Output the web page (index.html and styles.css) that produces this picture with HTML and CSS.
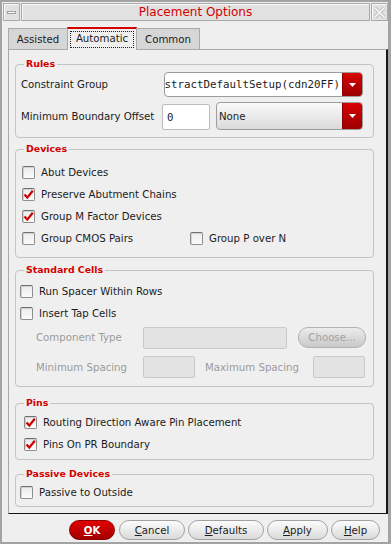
FILE: index.html
```html
<!DOCTYPE html>
<html>
<head>
<meta charset="utf-8">
<link rel="stylesheet" href="styles.css">
</head>
<body>
<div class="window">
  <div class="titlebar">
    <div class="tb-btn"><span class="dash"></span></div>
    <div class="tb-title">Placement Options</div>
    <div class="tb-btn">
      <svg width="13" height="13" viewBox="0 0 13 13"><path d="M2 2 L11 11 M11 2 L2 11" stroke="#bdbdbd" stroke-width="3.4" fill="none"/><path d="M2 2 L11 11 M11 2 L2 11" stroke="#fafafa" stroke-width="1.6" fill="none"/></svg>
    </div>
  </div>
  <div class="client">
    <div class="tabs">
      <div class="tab t-assisted">Assisted</div>
      <div class="tab t-auto active"><span class="focus">Automatic</span></div>
      <div class="tab t-common">Common</div>
    </div>
    <div class="panel">
      <fieldset class="group g-rules">
        <legend>Rules</legend>
        <div class="rules-body">
          <div class="frow r1">
            <span class="flabel l1">Constraint Group</span>
            <div class="combo combo-edit">
              <div class="combo-text mono"><span>AbstractDefaultSetup(cdn20FF)</span></div>
              <div class="combo-arrow"><svg width="7" height="4" viewBox="0 0 7 4"><path d="M0 0 H7 L3.5 4 Z" fill="#fff"/></svg></div>
            </div>
          </div>
          <div class="frow r2">
            <span class="flabel l2">Minimum Boundary Offset</span>
            <div class="entry mono">0</div>
            <div class="combo combo-none">
              <div class="combo-text none-text">None</div>
              <div class="combo-arrow"><svg width="7" height="4" viewBox="0 0 7 4"><path d="M0 0 H7 L3.5 4 Z" fill="#fff"/></svg></div>
            </div>
          </div>
        </div>
      </fieldset>

      <fieldset class="group g-devices">
        <legend>Devices</legend>
        <div class="devices-body">
          <div class="check"><span class="box"></span>Abut Devices</div>
          <div class="check"><span class="box on"><svg width="11" height="11" viewBox="0 0 11 11"><path d="M1.5 5.5 L4.3 8.6 L9.8 1.8" stroke="#d00000" stroke-width="2.3" fill="none"/></svg></span>Preserve Abutment Chains</div>
          <div class="check"><span class="box on"><svg width="11" height="11" viewBox="0 0 11 11"><path d="M1.5 5.5 L4.3 8.6 L9.8 1.8" stroke="#d00000" stroke-width="2.3" fill="none"/></svg></span>Group M Factor Devices</div>
          <div class="pair">
            <div class="check"><span class="box"></span>Group CMOS Pairs</div>
            <div class="check"><span class="box"></span>Group P over N</div>
          </div>
        </div>
      </fieldset>

      <fieldset class="group g-std">
        <legend>Standard Cells</legend>
        <div class="std-body">
          <div class="check"><span class="box"></span>Run Spacer Within Rows</div>
          <div class="check"><span class="box"></span>Insert Tap Cells</div>
          <div class="drow d1">
            <span class="dlabel">Component Type</span>
            <div class="dentry e-comp"></div>
            <div class="choose">Choose...</div>
          </div>
          <div class="drow d2">
            <span class="dlabel">Minimum Spacing</span>
            <div class="dentry e-small"></div>
            <span class="dlabel dlabel-max">Maximum Spacing</span>
            <div class="dentry e-small"></div>
          </div>
        </div>
      </fieldset>

      <fieldset class="group g-pins">
        <legend>Pins</legend>
        <div class="pins-body">
          <div class="check"><span class="box on"><svg width="11" height="11" viewBox="0 0 11 11"><path d="M1.5 5.5 L4.3 8.6 L9.8 1.8" stroke="#d00000" stroke-width="2.3" fill="none"/></svg></span>Routing Direction Aware Pin Placement</div>
          <div class="check"><span class="box on"><svg width="11" height="11" viewBox="0 0 11 11"><path d="M1.5 5.5 L4.3 8.6 L9.8 1.8" stroke="#d00000" stroke-width="2.3" fill="none"/></svg></span>Pins On PR Boundary</div>
        </div>
      </fieldset>

      <fieldset class="group g-passive">
        <legend>Passive Devices</legend>
        <div class="passive-body">
          <div class="check"><span class="box"></span>Passive to Outside</div>
        </div>
      </fieldset>
    </div>
    <div class="buttons">
      <div class="btn btn-ok"><u>O</u>K</div>
      <div class="btn btn-cancel"><u>C</u>ancel</div>
      <div class="btn btn-defaults"><u>D</u>efaults</div>
      <div class="btn btn-apply"><u>A</u>pply</div>
      <div class="btn btn-help"><u>H</u>elp</div>
    </div>
  </div>
</div>
</body>
</html>
```

FILE: styles.css
```css
* { box-sizing: border-box; }
html, body { margin: 0; padding: 0; }
body {
  width: 391px;
  height: 544px;
  overflow: hidden;
  background: #efefef;
  font-family: "DejaVu Sans", sans-serif;
  font-size: 10.2px;
  color: #1c1c1c;
}
.mono { font-family: "DejaVu Sans Mono", monospace; font-size: 10.8px; }

.window {
  width: 391px;
  height: 544px;
  border: 2px solid #a3a3a3;
  border-right-width: 3px;
  background: #efefef;
  display: flex;
  flex-direction: column;
}

/* title bar */
.titlebar {
  flex: none;
  height: 20px;
  display: flex;
  padding: 1px 0 0 1px;
}
.tb-btn {
  width: 17px;
  height: 18px;
  border: 1px solid #a9a9a9;
  background: #e1e1e1;
  box-shadow: inset 1px 1px 0 #f7f7f7;
  display: flex;
  align-items: center;
  justify-content: center;
}
.dash {
  width: 9px;
  height: 3px;
  border: 1px solid #a0a0a0;
  background: #fafafa;
}
.tb-title {
  flex: 1;
  height: 18px;
  margin: 0 1px;
  border: 1px solid #a9a9a9;
  background: #e1e1e1;
  box-shadow: inset 1px 1px 0 #f7f7f7;
  color: #d40000;
  font-size: 12px;
  line-height: 16px;
  text-align: center;
}

/* client */
.client {
  flex: 1;
  display: flex;
  flex-direction: column;
  padding: 5px 0 0 6px;
}
.tabs {
  flex: none;
  height: 23px;
  margin-bottom: -1px;
  display: flex;
  align-items: flex-start;
  position: relative;
  z-index: 1;
}
.tab {
  margin-top: 1px;
  height: 21px;
  border: 1px solid #a9a9a9;
  border-bottom: none;
  background: #d6d6d6;
  text-align: center;
  padding-top: 4px;
  line-height: 14px;
}
.t-assisted { width: 60px; }
.t-auto { width: 70px; margin-left: -1px; }
.t-common { width: 64px; margin-left: -1px; }
.tab.active {
  margin-top: 0;
  height: 23px;
  background: #efefef;
  border-top: 2px solid #d40000;
  padding: 2px 2px 0;
  display: flex;
}
.focus {
  flex: none;
  width: 100%;
  height: 17px;
  border: 1px dotted #202020;
  line-height: 14px;
}

.panel {
  flex: 1;
  border: 1px solid #a9a9a9;
  border-right: 2px solid #161616;
  border-bottom: 1px solid #161616;
  padding: 7px 12px 0 6px;
  display: flex;
  flex-direction: column;
}

/* group boxes */
.group {
  margin: 0;
  padding: 0;
  min-width: 0;
  border: 1px solid #c4c4c4;
  border-radius: 4px;
}
.group legend {
  margin-left: 8px;
  padding: 0 2px;
  font-weight: bold;
  font-size: 9.4px;
  line-height: 14px;
  color: #d40000;
}
.g-devices { margin-top: 4px; }
.g-std { margin-top: 5px; }
.g-pins { margin-top: 9px; }
.g-passive { margin-top: 7px; }

.rules-body { padding: 1px 0 7px 5px; display: flex; flex-direction: column; gap: 5px; }
.frow { display: flex; align-items: center; }
.r1 { height: 25px; }
.r2 { height: 28px; align-items: flex-end; }
.flabel { white-space: nowrap; }
.l1 { width: 143px; align-self: center; }
.l2 { width: 141px; align-self: center; }

.combo {
  display: flex;
  border: 1px solid #9d9d9d;
  border-radius: 4px;
  overflow: hidden;
}
.combo-edit { width: 199px; height: 25px; background: #fff; }
.combo-none { width: 147px; height: 28px; margin-left: 6px; background: linear-gradient(#fafafa, #dadada); }
.combo-text {
  flex: 1;
  min-width: 0;
  display: flex;
  align-items: center;
  justify-content: flex-end;
  overflow: hidden;
  white-space: nowrap;
  padding-right: 2px;
}
.none-text { justify-content: flex-start; padding-left: 2px; }
.combo-arrow {
  flex: none;
  width: 20px;
  background: linear-gradient(#d80000, #9c0000);
  border-left: 1px solid #8a0000;
  display: flex;
  align-items: center;
  justify-content: center;
}
.entry {
  width: 48px;
  height: 26px;
  background: #fff;
  border: 1px solid #bdbdbd;
  border-radius: 2px;
  padding-left: 4px;
  display: flex;
  align-items: center;
}

/* checkboxes */
.check {
  height: 22px;
  display: flex;
  align-items: center;
  gap: 6px;
  white-space: nowrap;
}
.box {
  flex: none;
  width: 13px;
  height: 13px;
  border: 1px solid #8e8e8e;
  border-top-color: #6f6f6f;
  border-radius: 2px;
  background: linear-gradient(#ececec, #fbfbfb);
  box-shadow: inset 1px 1px 0 #d2d2d2;
  display: flex;
  align-items: center;
  justify-content: center;
}
.devices-body { padding: 5px 0 8px 6px; }
.pair { display: grid; grid-template-columns: 168px auto; }

.std-body { padding: 3px 0 8px 4px; }
.drow { display: flex; align-items: center; color: #9b9b9b; }
.d1 { height: 23px; margin-top: 2px; }
.d2 { height: 22px; margin-top: 7px; }
.dlabel { white-space: nowrap; }
.d1 .dlabel, .d2 .dlabel:first-child { width: 123px; padding-left: 16px; }
.dlabel-max { width: 118px; padding-left: 10px; }
.dentry {
  height: 22px;
  background: #e3e3e3;
  border: 1px solid #c9c9c9;
  border-radius: 2px;
}
.e-comp { width: 144px; }
.e-small { width: 52px; }
.choose {
  margin-left: 11px;
  width: 68px;
  height: 21px;
  border: 1px solid #b3b3b3;
  border-radius: 10px;
  background: linear-gradient(#ececec, #c9c9c9);
  color: #a2a2a2;
  display: flex;
  align-items: center;
  justify-content: center;
}

.pins-body { padding: 1px 0 4px 8px; }
.passive-body { padding: 0 0 3px 4px; }

/* buttons */
.buttons {
  flex: none;
  height: 28px;
  display: flex;
  justify-content: flex-end;
  align-items: flex-start;
  padding: 6px 8px 0 0;
  gap: 3px;
}
.btn {
  height: 20px;
  border: 1px solid #a2a2a2;
  border-radius: 10px;
  background: linear-gradient(#fcfcfc, #dadada);
  display: flex;
  align-items: center;
  justify-content: center;
  white-space: nowrap;
}
.btn-ok {
  width: 46px;
  margin-right: 1px;
  background: linear-gradient(#e20000, #a20000);
  border-color: #8c0000;
  color: #fff;
  font-weight: bold;
}
.btn-cancel { width: 66px; }
.btn-defaults { width: 76px; }
.btn-apply { width: 61px; }
.btn-help { width: 49px; }
```
